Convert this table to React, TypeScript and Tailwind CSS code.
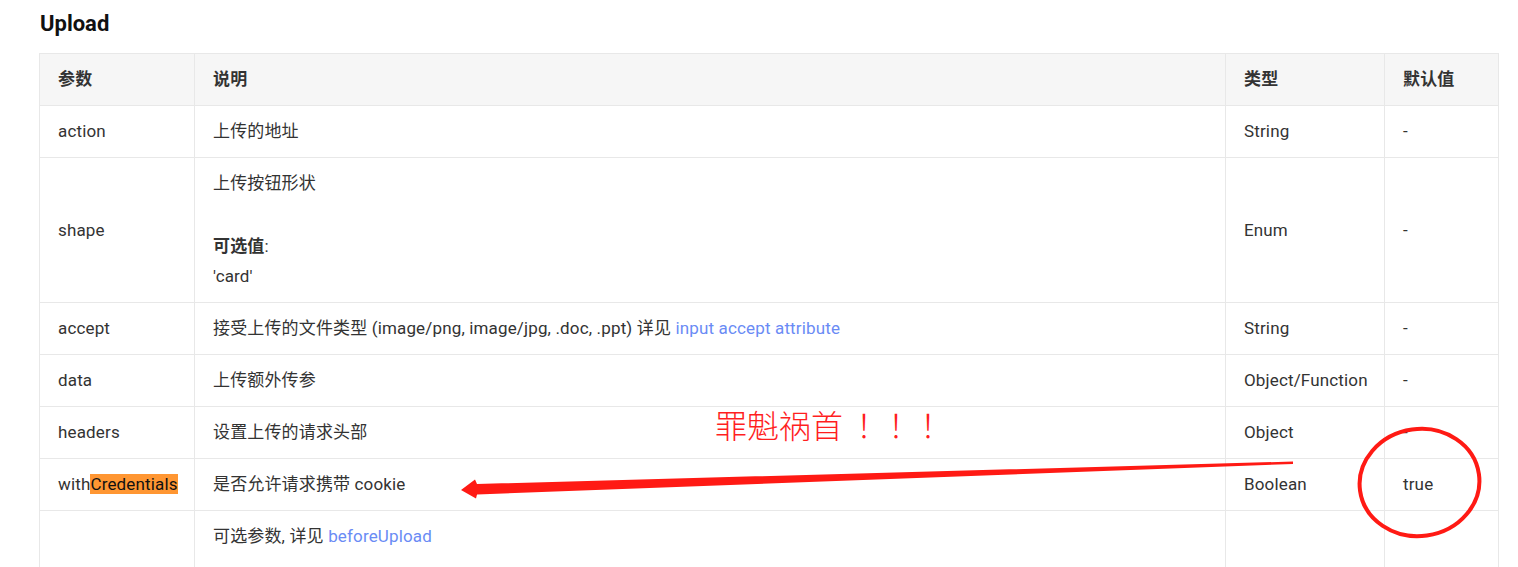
import React from "react";

const FONT = '"Roboto", "Noto Sans CJK SC", sans-serif';

function Td({ children, className = "" }: { children?: React.ReactNode; className?: string }) {
  return (
    <td className={"border border-[#e8e8e8] px-[18px] pt-[10px] pb-[11px] leading-[30px] align-middle " + className}>
      {children}
    </td>
  );
}

function Th({ children }: { children?: React.ReactNode }) {
  return (
    <th className="border border-[#e8e8e8] px-[18px] pt-[10px] pb-[11px] leading-[30px] text-left font-bold bg-[#f6f6f6] align-middle">
      {children}
    </th>
  );
}

const Link = ({ children }: { children: React.ReactNode }) => (
  <span className="text-[#6a8bf5]">{children}</span>
);

export default function App() {
  return (
    <div className="relative w-[1518px] h-[567px] overflow-hidden bg-white text-[#333] text-[17px] tracking-[0.15px]" style={{ fontFamily: FONT }}>
      <div className="pl-[40px] pt-[9px] leading-[30px] text-[22px] font-bold text-[#111] tracking-normal">Upload</div>
      <table className="ml-[39px] mt-[14px] w-[1459px] table-fixed border-collapse">
        <colgroup>
          <col className="w-[155px]" />
          <col className="w-[1031px]" />
          <col className="w-[159px]" />
          <col className="w-[114px]" />
        </colgroup>
        <thead>
          <tr>
            <Th>参数</Th>
            <Th>说明</Th>
            <Th>类型</Th>
            <Th>默认值</Th>
          </tr>
        </thead>
        <tbody>
          <tr>
            <Td>action</Td>
            <Td>上传的地址</Td>
            <Td>String</Td>
            <Td>-</Td>
          </tr>
          <tr>
            <Td>shape</Td>
            <Td>
              <div>上传按钮形状</div>
              <div className="mt-[33px]"><span className="font-bold">可选值</span>:</div>
              <div>'card'</div>
            </Td>
            <Td>Enum</Td>
            <Td>-</Td>
          </tr>
          <tr>
            <Td>accept</Td>
            <Td>
              接受上传的文件类型 (image/png, image/jpg, .doc, .ppt) 详见 <Link>input accept attribute</Link>
            </Td>
            <Td>String</Td>
            <Td>-</Td>
          </tr>
          <tr>
            <Td>data</Td>
            <Td>上传额外传参</Td>
            <Td>Object/Function</Td>
            <Td>-</Td>
          </tr>
          <tr>
            <Td>headers</Td>
            <Td>设置上传的请求头部</Td>
            <Td>Object</Td>
            <Td>-</Td>
          </tr>
          <tr>
            <Td>
              with<span className="bg-[#ff9632] text-[#111]">Credentials</span>
            </Td>
            <Td>是否允许请求携带 cookie</Td>
            <Td>Boolean</Td>
            <Td>true</Td>
          </tr>
          <tr>
            <Td className="pb-[60px]"></Td>
            <Td className="pb-[60px]">
              可选参数, 详见 <Link>beforeUpload</Link>
            </Td>
            <Td className="pb-[60px]"></Td>
            <Td className="pb-[60px]"></Td>
          </tr>
        </tbody>
      </table>

      {/* annotation text */}
      <div
        className="absolute left-[715px] top-[404px] text-[32px] leading-[40px] text-[#ff1f1f] whitespace-nowrap tracking-normal"
        style={{ fontFamily: '"Noto Sans CJK SC", sans-serif', fontWeight: 300 }}
      >
        <span>罪魁祸首</span>
        <span className="inline-block ml-[13px]">！</span>
        <span className="inline-block">！</span>
        <span className="inline-block">！</span>
      </div>

      {/* arrow and circle */}
      <svg className="absolute left-0 top-0 pointer-events-none" width="1518" height="567" viewBox="0 0 1518 567">
        <polygon
          fill="#ff1a14"
          points="1293,461.5 1293,464 477,494.5 476,498.5 461,490 475,479.5 477,484"
        />
        <ellipse cx="1419.5" cy="482.5" rx="60" ry="53.5" fill="none" stroke="#ff1a14" strokeWidth="4" transform="rotate(-8 1419.5 482.5)" />
      </svg>
    </div>
  );
}
